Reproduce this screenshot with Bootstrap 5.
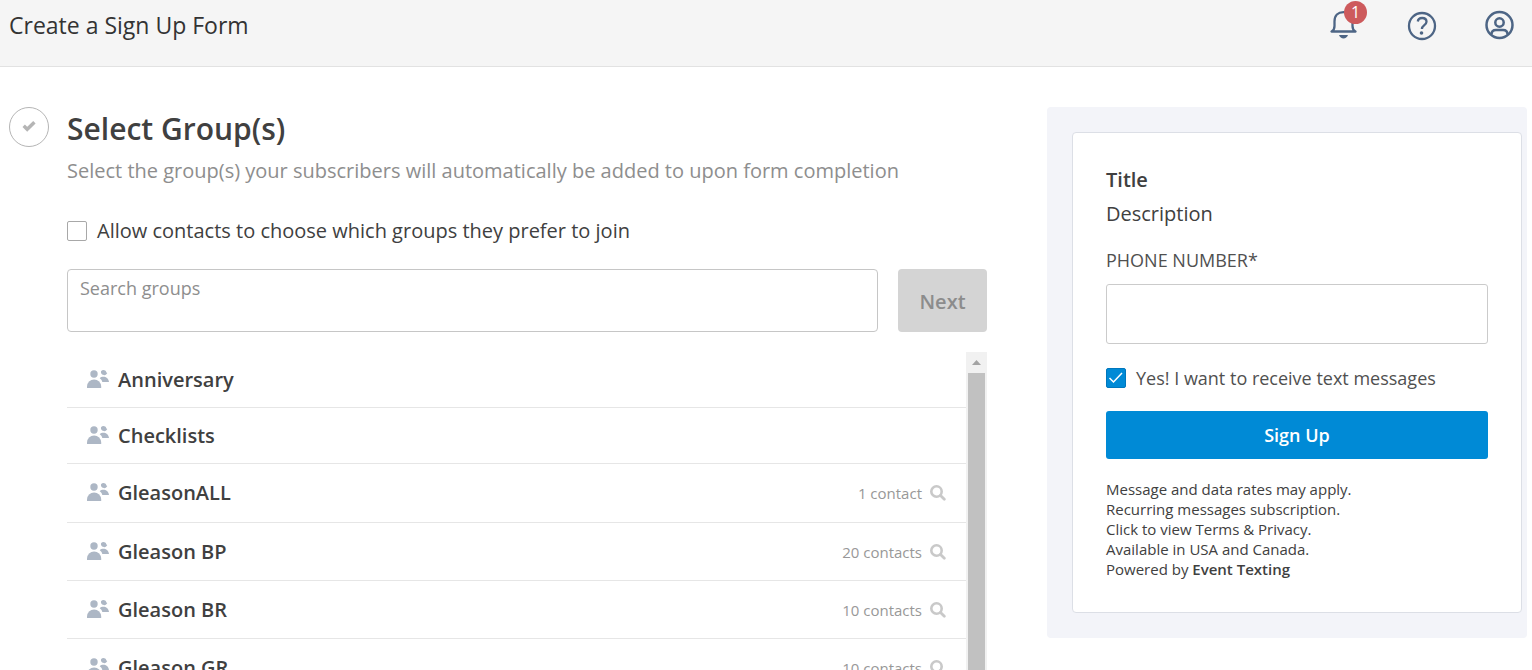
<!DOCTYPE html>
<html lang="en">
<head>
<meta charset="utf-8">
<meta name="viewport" content="width=device-width, initial-scale=1">
<title>Create a Sign Up Form</title>
<link rel="stylesheet" href="https://cdn.jsdelivr.net/npm/bootstrap@5.3.0/dist/css/bootstrap.min.css">
<style>
  body { font-family: "Open Sans", sans-serif; font-size: 20px; line-height: 28px; color: #404040; }
  .app-header { background: #f5f5f5; border-bottom: 1px solid #e2e2e2; height: 67px; padding: 9px 17px 0 9px; }
  .app-title { font-size: 23px; line-height: 32px; font-weight: 500; color: #333; }
  .tool-btn { color: #4d6585; width: 30px; height: 30px; border: 0; }
  .tool-btn svg { display: block; }
  .alert-count { top: -8px; left: 15px; width: 23px; height: 23px; background: #cd5a5c; font-size: 16px; line-height: 22px; font-weight: 400; padding: 0; }
  .page-main { min-height: 0; padding: 40px 5px 0 9px; gap: 60px; }
  .step-mark { width: 40px; height: 40px; border: 1px solid #b5b5b5; color: #b5b5b5; }
  .step { gap: 18px; min-width: 0; }
  .step-title { font-size: 30px; line-height: 43px; font-weight: 600; }
  .step-hint { color: #8e8e8e; line-height: 42px; margin-bottom: 25px; }
  .form-check.tick-row { min-height: 28px; padding: 0; gap: 10px; line-height: 28px; }
  .form-check.tick-row .form-check-input { float: none; width: 20px; height: 20px; margin: 0; border: 1px solid #a8a8a8; border-radius: 2px; flex: none; }
  .tick-row .form-check-input:checked { background-color: #008ad6; border-color: #0077bd;
    background-size: 18px 18px;
    background-image: url("data:image/svg+xml,%3csvg xmlns='http://www.w3.org/2000/svg' viewBox='0 0 18 18'%3e%3cpath fill='none' stroke='%23fff' stroke-width='1.5' d='M2.5 9l4 4L15 4'/%3e%3c/svg%3e"); }
  .search-row { gap: 20px; margin-top: 24px; margin-bottom: 20px; }
  .search-box { height: 63px; border: 1px solid #c6c6c6; border-radius: 4px; padding: 4px 12px 30px; font-size: 18px; color: #404040; }
  .search-box::placeholder { color: #8e8e8e; }
  .next-btn, .next-btn:disabled { width: 89px; background: #d4d4d4; border: 0; border-radius: 4px; color: #8c8c8c; font-size: 20px; font-weight: 600; opacity: 1; padding: 2px 0 0; }
  .group-area { min-height: 0; }
  .group-list .list-group-item { height: 58px; padding: 0 20px 0 20px; border-color: #e6e6e6; color: #404040; font-weight: 600; gap: 9px; }
  .group-list .no-contacts { height: 56px; }
  .group-list .first-contacts { height: 59px; }
  .group-list .people { color: #adb7c5; }
  .contact-count { font-size: 15px; font-weight: 400; color: #989898; gap: 8px; }
  .contact-count svg { color: #c9c9c9; }
  .scroll-track { width: 21px; background: #f1f1f1; flex: none; }
  .scroll-up { height: 21px; }
  .scroll-thumb { background: #c1c1c1; margin: 0 2px; }
  .preview { width: 480px; background: #f3f4f9; border-radius: 4px; padding: 25px 5px 25px 25px; flex: none; }
  .preview-card { border: 1px solid #dcdfe6; border-radius: 4px; padding: 31px 33px 33px; }
  .preview-title { font-size: 20px; line-height: 32px; font-weight: 600; }
  .preview-desc { line-height: 36px; }
  .phone-label { font-size: 18px; line-height: 28px; font-weight: 500; color: #505050; margin: 14px 0 10px; }
  .phone-box { height: 60px; border: 1px solid #cbcbcb; border-radius: 3px; }
  .consent { margin: 20px 0 19px; font-size: 18px; font-weight: 500; color: #505050; }
  .signup-btn { height: 48px; background: #008ad6; border: 0; border-radius: 3px; color: #fff; font-size: 18px; font-weight: 600; }
  .legal { font-size: 15px; line-height: 20px; margin-top: 20px; }
  .legal a { color: inherit; text-decoration: none; }
  .legal .brand { font-weight: 600; }
  .header-tools { gap: 48px; }
  @media (min-width: 1200px) { body { height: 100vh; overflow: hidden; } }
</style>
</head>
<body class="d-flex flex-column bg-white">
<svg width="0" height="0" class="position-absolute" aria-hidden="true">
  <symbol id="people" viewBox="0 0 22 20">
    <g fill="currentColor">
      <circle cx="7" cy="4" r="3.700"/><path d="M0 18v-1.500a7.100 7.100 0 0 1 14.200 0v1.500z"/>
      <path d="M14.200 1c1.500-1.500 4.500-1.200 5.200 1.500l.9.600c-.8 1.800-2.600 2.600-4.300 1.700-1.700-.8-2.500-2.200-1.800-3.800z"/>
      <path d="M12.700 8.200c2.500-2.600 8.800-1.800 9.300 3.800h-6.700c-.4-1.800-1.300-3-2.600-3.800z"/>
    </g>
  </symbol>
  <symbol id="lens" viewBox="0 0 16 16">
    <circle cx="6.500" cy="6.500" r="5.200" fill="none" stroke="currentColor" stroke-width="2.600"/>
    <path d="M10.500 10.500l3.800 3.800" stroke="currentColor" stroke-width="2.800" stroke-linecap="round"/>
  </symbol>
</svg>

<header class="app-header d-flex justify-content-between align-items-start flex-shrink-0">
  <h1 class="app-title m-0">Create a Sign Up Form</h1>
  <div class="header-tools d-flex">
    <button type="button" class="tool-btn bg-transparent p-0 position-relative" aria-label="Notifications">
      <svg width="30" height="32" viewBox="0 0 30 32" fill="none" stroke="currentColor" stroke-width="2.300">
        <path d="M2.500 22.500c2.300-1 3-2.700 3-5.500v-4.500c0-6 3.500-9.300 9-9.300s9 3.300 9 9.300v4.500c0 2.800.7 4.500 3 5.500z" stroke-linejoin="round"/>
        <path d="M10 26h9c-.8 2-2.500 3.500-4.500 3.500s-3.700-1.500-4.500-3.500z" fill="currentColor" stroke="none"/>
      </svg>
      <span class="alert-count badge rounded-circle position-absolute">1</span>
    </button>
    <button type="button" class="tool-btn bg-transparent p-0" aria-label="Help">
      <svg width="30" height="32" viewBox="0 0 30 32" fill="none" stroke="currentColor" stroke-width="2.300">
        <circle cx="15" cy="17" r="13"/>
        <path d="M10.800 12.500c.3-2.500 2-3.500 4.300-3.500 2.600 0 4.400 1.300 4.400 3.700 0 3.500-4.600 3.300-4.600 7.300" stroke-width="2.300"/>
        <circle cx="14.500" cy="24" r="1.800" fill="currentColor" stroke="none"/>
      </svg>
    </button>
    <button type="button" class="tool-btn bg-transparent p-0" aria-label="Account">
      <svg width="30" height="32" viewBox="0 0 30 32" fill="none" stroke="currentColor" stroke-width="2.500">
        <circle cx="14.500" cy="16" r="13"/><circle cx="14.500" cy="13.500" r="4.200"/>
        <path d="M6.500 25.500c0-3.200 1.500-4.500 4.500-4.500h7c3 0 4.500 1.300 4.500 4.500"/>
      </svg>
    </button>
  </div>
</header>

<main class="page-main d-flex flex-column flex-xl-row flex-grow-1">
  <section class="step d-flex flex-grow-1">
    <div class="step-mark rounded-circle d-flex flex-shrink-0 align-items-center justify-content-center">
      <svg width="14" height="12" viewBox="0 0 14 12" fill="none" stroke="currentColor" stroke-width="3.400"><path d="M1.700 4.800l3.500 3.500 7.200-7.100"/></svg>
    </div>
    <div class="d-flex flex-column flex-grow-1">
      <h2 class="step-title m-0">Select Group(s)</h2>
      <p class="step-hint">Select the group(s) your subscribers will automatically be added to upon form completion</p>
      <div class="form-check tick-row d-flex align-items-center m-0">
        <input class="form-check-input" type="checkbox" id="allow">
        <label class="form-check-label" for="allow">Allow contacts to choose which groups they prefer to join</label>
      </div>
      <div class="search-row d-flex">
        <input type="text" class="search-box form-control flex-grow-1" placeholder="Search groups" aria-label="Search groups">
        <button type="button" class="next-btn btn flex-shrink-0" disabled>Next</button>
      </div>
      <div class="group-area d-flex flex-grow-1">
        <ul class="group-list list-group list-group-flush flex-grow-1 overflow-hidden">
          <li class="list-group-item no-contacts d-flex align-items-center flex-shrink-0"><svg class="people" width="22" height="20"><use href="#people"/></svg>Anniversary</li>
          <li class="list-group-item no-contacts d-flex align-items-center flex-shrink-0"><svg class="people" width="22" height="20"><use href="#people"/></svg>Checklists</li>
          <li class="list-group-item first-contacts d-flex align-items-center flex-shrink-0"><svg class="people" width="22" height="20"><use href="#people"/></svg>GleasonALL<span class="contact-count ms-auto d-flex align-items-center">1 contact<svg width="16" height="16"><use href="#lens"/></svg></span></li>
          <li class="list-group-item d-flex align-items-center flex-shrink-0"><svg class="people" width="22" height="20"><use href="#people"/></svg>Gleason BP<span class="contact-count ms-auto d-flex align-items-center">20 contacts<svg width="16" height="16"><use href="#lens"/></svg></span></li>
          <li class="list-group-item d-flex align-items-center flex-shrink-0"><svg class="people" width="22" height="20"><use href="#people"/></svg>Gleason BR<span class="contact-count ms-auto d-flex align-items-center">10 contacts<svg width="16" height="16"><use href="#lens"/></svg></span></li>
          <li class="list-group-item d-flex align-items-center flex-shrink-0"><svg class="people" width="22" height="20"><use href="#people"/></svg>Gleason GR<span class="contact-count ms-auto d-flex align-items-center">10 contacts<svg width="16" height="16"><use href="#lens"/></svg></span></li>
        </ul>
        <div class="scroll-track d-flex flex-column" aria-hidden="true">
          <div class="scroll-up d-flex align-items-center justify-content-center"><svg width="9" height="5" viewBox="0 0 9 5"><path d="M0 5L4.500 0 9 5z" fill="#a3a3a3"/></svg></div>
          <div class="scroll-thumb flex-grow-1"></div>
        </div>
      </div>
    </div>
  </section>

  <aside class="preview align-self-start">
    <form class="preview-card bg-white">
      <h3 class="preview-title m-0">Title</h3>
      <p class="preview-desc m-0">Description</p>
      <label class="phone-label d-block" for="phone">PHONE NUMBER*</label>
      <input type="tel" id="phone" class="phone-box form-control">
      <div class="form-check tick-row consent d-flex align-items-center">
        <input class="form-check-input" type="checkbox" id="consent" checked>
        <label class="form-check-label" for="consent">Yes! I want to receive text messages</label>
      </div>
      <button type="button" class="signup-btn btn w-100">Sign Up</button>
      <p class="legal mb-0">Message and data rates may apply.<br>Recurring messages subscription.<br>Click to view <a href="#terms">Terms &amp; Privacy</a>.<br>Available in USA and Canada.<br>Powered by <a href="#brand" class="brand">Event Texting</a></p>
    </form>
  </aside>
</main>
<script src="https://cdn.jsdelivr.net/npm/bootstrap@5.3.0/dist/js/bootstrap.bundle.min.js"></script>
</body>
</html>
